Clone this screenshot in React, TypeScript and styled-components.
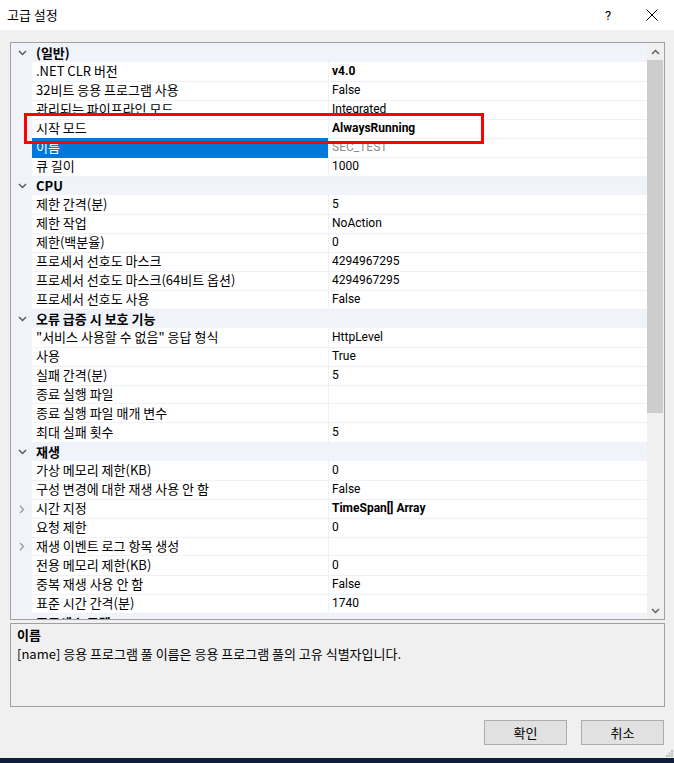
import React, { FC } from 'react';
import styled, { createGlobalStyle, css } from 'styled-components';

const GlobalStyle = createGlobalStyle`
    html, body {
        margin: 0;
        padding: 0;
        background: #f0f0f0;
    }
    body {
        font-family: "Noto Sans CJK KR", "Noto Sans", sans-serif;
        font-size: 13px;
        color: #000;
    }
`;

const Window = styled.div`
    position: relative;
    width: 674px;
    height: 763px;
    display: flex;
    flex-direction: column;
    background: #f0f0f0;
    overflow: hidden;
`;

const TitleBar = styled.div`
    height: 30px;
    flex-shrink: 0;
    display: flex;
    align-items: center;
    background: #ffffff;
    padding-left: 7px;
`;

const Title = styled.span`
    flex: 1;
    line-height: 16px;
`;

const TitleButton = styled.div`
    width: 44px;
    height: 30px;
    display: flex;
    align-items: center;
    justify-content: center;
    font-family: Roboto, sans-serif;
    font-size: 13px;
    color: #000;
`;

const Body = styled.div`
    display: flex;
    flex-direction: column;
    padding: 12px 9px 0 10px;
`;

const Grid = styled.div`
    position: relative;
    height: 578px;
    box-sizing: border-box;
    border: 1px solid #a0a0a0;
    display: flex;
    background: #ffffff;
`;

const RowsArea = styled.div`
    flex: 1;
    overflow: hidden;
`;

const Row = styled.div<{ $category?: boolean }>`
    display: grid;
    grid-template-columns: 21px 297px 1fr;
    height: 19px;
    ${({ $category }) =>
        $category &&
        css`
            background: #f0f4fa;
        `}
`;

const Margin = styled.div`
    background: #f0f4fa;
    display: flex;
    align-items: center;
    justify-content: center;
    padding-left: 1px;
`;

const CategoryLabel = styled.div`
    grid-column: 2 / 4;
    font-weight: bold;
    line-height: 19px;
    padding-left: 4px;
    white-space: nowrap;
`;

const NameCell = styled.div<{ $selected?: boolean }>`
    box-sizing: border-box;
    padding-left: 4px;
    line-height: 18px;
    white-space: nowrap;
    overflow: hidden;
    border-bottom: 1px solid #eef1f6;
    border-right: 1px solid #eef1f6;
    ${({ $selected }) =>
        $selected &&
        css`
            background: #0078d7;
            color: #ffffff;
            border-bottom-color: #0078d7;
        `}
`;

const ValueCell = styled.div<{ $bold?: boolean; $readonly?: boolean }>`
    box-sizing: border-box;
    padding-left: 3px;
    line-height: 19px;
    white-space: nowrap;
    border-bottom: 1px solid #eef1f6;
    font-family: Roboto, "Noto Sans CJK KR", sans-serif;
    font-size: 12px;
    font-weight: ${({ $bold }) => ($bold ? 'bold' : 'normal')};
    color: ${({ $readonly }) => ($readonly ? '#8c8c8c' : '#000')};
`;

const ScrollBar = styled.div`
    width: 17px;
    flex-shrink: 0;
    background: #f0f0f0;
    display: flex;
    flex-direction: column;
    align-items: center;
`;

const ScrollArrow = styled.div`
    height: 17px;
    width: 100%;
    display: flex;
    align-items: center;
    justify-content: center;
`;

const ScrollTrack = styled.div`
    flex: 1;
    width: 100%;
    display: flex;
    flex-direction: column;
`;

const Thumb = styled.div`
    height: 353px;
    margin: 0 1px 0 0;
    background: #cdcdcd;
`;

const Highlight = styled.div`
    position: absolute;
    left: 13px;
    top: 70px;
    width: 460px;
    height: 31px;
    box-sizing: border-box;
    border: 3px solid #ff0000;
    pointer-events: none;
`;

const Description = styled.div`
    margin-top: 3px;
    height: 84px;
    box-sizing: border-box;
    border: 1px solid #a0a0a0;
    padding: 1px 6px;
    background: #f0f0f0;
`;

const DescTitle = styled.div`
    font-weight: bold;
    line-height: 19px;
`;

const DescText = styled.div`
    line-height: 19px;
`;

const ButtonRow = styled.div`
    margin-top: 13px;
    display: flex;
    justify-content: flex-end;
    gap: 14px;
    padding-right: 1px;
`;

const Button = styled.div`
    width: 83px;
    height: 25px;
    box-sizing: border-box;
    border: 1px solid #adadad;
    background: #e1e1e1;
    display: flex;
    align-items: center;
    justify-content: center;
`;

const Taskbar = styled.div`
    margin-top: auto;
    height: 5px;
    background: #0c1f38;
`;

const Grip = styled.svg`
    position: absolute;
    right: 1px;
    bottom: 6px;
`;

type Prop = {
    name: string;
    value: string;
    bold?: boolean;
    selected?: boolean;
    readonly?: boolean;
    expandable?: boolean;
};

type Section = { title: string; rows: Prop[] };

const sections: Section[] = [
    {
        title: '(일반)',
        rows: [
            { name: '.NET CLR 버전', value: 'v4.0', bold: true },
            { name: '32비트 응용 프로그램 사용', value: 'False' },
            { name: '관리되는 파이프라인 모드', value: 'Integrated' },
            { name: '시작 모드', value: 'AlwaysRunning', bold: true },
            { name: '이름', value: 'SEC_TEST', selected: true, readonly: true },
            { name: '큐 길이', value: '1000' },
        ],
    },
    {
        title: 'CPU',
        rows: [
            { name: '제한 간격(분)', value: '5' },
            { name: '제한 작업', value: 'NoAction' },
            { name: '제한(백분율)', value: '0' },
            { name: '프로세서 선호도 마스크', value: '4294967295' },
            { name: '프로세서 선호도 마스크(64비트 옵션)', value: '4294967295' },
            { name: '프로세서 선호도 사용', value: 'False' },
        ],
    },
    {
        title: '오류 급증 시 보호 기능',
        rows: [
            { name: '"서비스 사용할 수 없음" 응답 형식', value: 'HttpLevel' },
            { name: '사용', value: 'True' },
            { name: '실패 간격(분)', value: '5' },
            { name: '종료 실행 파일', value: '' },
            { name: '종료 실행 파일 매개 변수', value: '' },
            { name: '최대 실패 횟수', value: '5' },
        ],
    },
    {
        title: '재생',
        rows: [
            { name: '가상 메모리 제한(KB)', value: '0' },
            { name: '구성 변경에 대한 재생 사용 안 함', value: 'False' },
            { name: '시간 지정', value: 'TimeSpan[] Array', bold: true, expandable: true },
            { name: '요청 제한', value: '0' },
            { name: '재생 이벤트 로그 항목 생성', value: '', expandable: true },
            { name: '전용 메모리 제한(KB)', value: '0' },
            { name: '중복 재생 사용 안 함', value: 'False' },
            { name: '표준 시간 간격(분)', value: '1740' },
        ],
    },
    { title: '프로세스 모델', rows: [] },
];

const ChevronDown: FC<{ color?: string }> = ({ color = '#5a5a5a' }) => (
    <svg width="9" height="6" viewBox="0 0 9 6">
        <path d="M1 1 L4.5 4.5 L8 1" fill="none" stroke={color} strokeWidth="1.5" />
    </svg>
);

const ChevronUp: FC<{ color?: string }> = ({ color = '#606060' }) => (
    <svg width="9" height="6" viewBox="0 0 9 6">
        <path d="M1 5 L4.5 1.5 L8 5" fill="none" stroke={color} strokeWidth="1.5" />
    </svg>
);

const ChevronRight = () => (
    <svg width="6" height="9" viewBox="0 0 6 9">
        <path d="M1 1 L4.5 4.5 L1 8" fill="none" stroke="#9a9a9a" strokeWidth="1.4" />
    </svg>
);

const CloseIcon = () => (
    <svg width="12" height="12" viewBox="0 0 12 12">
        <path d="M0.5 0.5 L11.5 11.5 M11.5 0.5 L0.5 11.5" stroke="#000" strokeWidth="1" />
    </svg>
);

const PropertyRow: FC<{ prop: Prop }> = ({ prop }) => (
    <Row>
        <Margin>{prop.expandable && <ChevronRight />}</Margin>
        <NameCell $selected={prop.selected}>{prop.name}</NameCell>
        <ValueCell $bold={prop.bold} $readonly={prop.readonly}>
            {prop.value}
        </ValueCell>
    </Row>
);

export default function App() {
    return (
        <Window>
            <GlobalStyle />
            <TitleBar>
                <Title>고급 설정</Title>
                <TitleButton>?</TitleButton>
                <TitleButton>
                    <CloseIcon />
                </TitleButton>
            </TitleBar>
            <Body>
                <Grid>
                    <RowsArea>
                        {sections.map((section) => (
                            <React.Fragment key={section.title}>
                                <Row $category>
                                    <Margin>
                                        <ChevronDown />
                                    </Margin>
                                    <CategoryLabel>{section.title}</CategoryLabel>
                                </Row>
                                {section.rows.map((prop) => (
                                    <PropertyRow key={prop.name} prop={prop} />
                                ))}
                            </React.Fragment>
                        ))}
                    </RowsArea>
                    <ScrollBar>
                        <ScrollArrow>
                            <ChevronUp />
                        </ScrollArrow>
                        <ScrollTrack>
                            <Thumb />
                        </ScrollTrack>
                        <ScrollArrow>
                            <ChevronDown color="#606060" />
                        </ScrollArrow>
                    </ScrollBar>
                    <Highlight />
                </Grid>
                <Description>
                    <DescTitle>이름</DescTitle>
                    <DescText>[name] 응용 프로그램 풀 이름은 응용 프로그램 풀의 고유 식별자입니다.</DescText>
                </Description>
                <ButtonRow>
                    <Button>확인</Button>
                    <Button>취소</Button>
                </ButtonRow>
            </Body>
            <Taskbar />
            <Grip width="7" height="7" viewBox="0 0 7 7">
                <rect x="5" y="0" width="2" height="2" fill="#c0c0c0" />
                <rect x="2.5" y="2.5" width="2" height="2" fill="#c0c0c0" />
                <rect x="5" y="2.5" width="2" height="2" fill="#c0c0c0" />
                <rect x="0" y="5" width="2" height="2" fill="#c0c0c0" />
                <rect x="2.5" y="5" width="2" height="2" fill="#c0c0c0" />
                <rect x="5" y="5" width="2" height="2" fill="#c0c0c0" />
            </Grip>
        </Window>
    );
}
